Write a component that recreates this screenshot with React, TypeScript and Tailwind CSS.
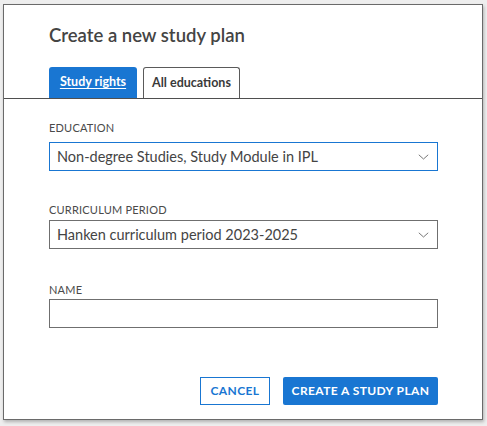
import React from 'react';

const font = "font-['Lato',sans-serif]";

const Chevron: React.FC = () => (
  <svg width="11" height="6" viewBox="0 0 11 6" fill="none" className="shrink-0">
    <path d="M0.8 0.8 L5.5 5 L10.2 0.8" stroke="#777" strokeWidth="1" />
  </svg>
);

const SelectBox: React.FC<{ value: string; active?: boolean }> = ({ value, active }) => (
  <div
    className={`flex h-[29px] w-[389px] items-center justify-between pl-[7px] pr-[8px] ${
      active ? 'border border-[#1976d2]' : 'border border-[#6f6f6f]'
    }`}
  >
    <span className="text-[14.5px] leading-[20px] text-[#444]">{value}</span>
    <Chevron />
  </div>
);

const Label: React.FC<{ children: React.ReactNode }> = ({ children }) => (
  <div className="text-[11px] leading-[16px] uppercase tracking-[0.2px] text-[#4a4a4a]">{children}</div>
);

const App: React.FC = () => {
  return (
    <div className={`min-h-screen bg-[#eeeeee] pl-[3px] pt-[4px] ${font}`}>
      <div className="flex h-[416px] w-[480px] flex-col border border-[#6a6a6a] bg-white shadow-[1px_2px_3px_rgba(0,0,0,0.25)]">
        {/* Header */}
        <div className="px-[45px] pt-[18px]">
          <h2 className="text-[18.5px] leading-[24px] font-semibold text-[#444]">Create a new study plan</h2>
        </div>

        {/* Tabs */}
        <div className="mt-[20px] flex gap-[6px] border-b border-[#4f4f4f] px-[45px]">
          <button className="h-[31px] w-[88px] rounded-t-[3px] bg-[#1976d2] text-[12.5px] font-bold text-white underline underline-offset-2">
            Study rights
          </button>
          <button className="h-[31px] w-[97px] rounded-t-[3px] border border-b-0 border-[#5a5a5a] bg-white text-[12.5px] font-bold text-[#3a3a3a]">
            All educations
          </button>
        </div>

        {/* Form */}
        <div className="flex flex-1 flex-col px-[45px] pt-[21px]">
          <Label>Education</Label>
          <div className="mt-[6px]">
            <SelectBox value="Non-degree Studies, Study Module in IPL" active />
          </div>

          <div className="mt-[31px]">
            <Label>Curriculum period</Label>
          </div>
          <div className="mt-[2px]">
            <SelectBox value="Hanken curriculum period 2023-2025" />
          </div>

          <div className="mt-[33px]">
            <Label>Name</Label>
          </div>
          <div className="mt-[1px] h-[29px] w-[389px] border border-[#6f6f6f]" />

          <div className="mt-auto mb-[14px] flex w-[389px] justify-end gap-[13px]">
            <button className="h-[28px] w-[70px] border border-[#1976d2] bg-white text-[12px] font-bold uppercase tracking-[0.4px] text-[#1976d2]">
              Cancel
            </button>
            <button className="h-[28px] w-[155px] rounded-[2px] bg-[#1976d2] text-[12px] font-bold uppercase tracking-[0.4px] text-white">
              Create a study plan
            </button>
          </div>
        </div>
      </div>
    </div>
  );
};

export default App;
